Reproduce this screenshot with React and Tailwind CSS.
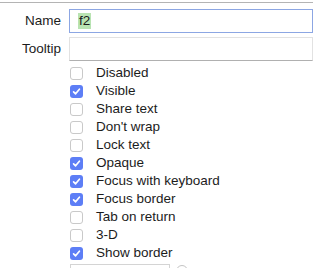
import React from 'react';

const options = [
  { label: 'Disabled', checked: false },
  { label: 'Visible', checked: true },
  { label: 'Share text', checked: false },
  { label: "Don't wrap", checked: false },
  { label: 'Lock text', checked: false },
  { label: 'Opaque', checked: true },
  { label: 'Focus with keyboard', checked: true },
  { label: 'Focus border', checked: true },
  { label: 'Tab on return', checked: false },
  { label: '3-D', checked: false },
  { label: 'Show border', checked: true },
];

const Checkbox = ({ checked }) =>
  checked ? (
    <span className="flex items-center justify-center w-[13px] h-[13px] rounded-[3px] bg-[#5d7ef6]">
      <svg width="9" height="9" viewBox="0 0 9 9" fill="none">
        <path d="M1.6 4.8 L3.6 6.8 L7.4 2.2" stroke="white" strokeWidth="1.7" strokeLinecap="round" strokeLinejoin="round" />
      </svg>
    </span>
  ) : (
    <span className="block w-[13px] h-[13px] rounded-[3px] bg-white border border-[#c9c9c9]" />
  );

export default function App() {
  return (
    <div className="w-[313px] h-[268px] overflow-hidden bg-white pt-[2px] text-[13.5px] text-[#1c1c1c] font-['Liberation_Sans',Helvetica,Arial,sans-serif]">
      <div className="border-t border-[#b4b4b4] pt-[6px]">
        <div className="grid grid-cols-[61px_1fr] gap-x-2 gap-y-[4px] items-center">
          <span className="text-right">Name</span>
          <div className="h-[24px] border border-[#8ca6e3] flex items-center pl-[8px]">
            <span className="bg-[#b9e3b2] px-[1px] leading-[16px]">f2</span>
          </div>
          <span className="text-right">Tooltip</span>
          <div className="h-[24px] border border-[#e2e2e2] border-b-[#b0b0b0]" />
        </div>

        <div className="mt-[3px] pl-[70px] flex flex-col">
          {options.map((o) => (
            <div key={o.label} className="h-[18px] flex items-center gap-[13px]">
              <Checkbox checked={o.checked} />
              <span>{o.label}</span>
            </div>
          ))}
          <div className="mt-[2px] flex items-start gap-[6px]">
            <div className="w-[100px] h-[20px] border border-[#d4d4d4]" />
            <span className="block w-[12px] h-[12px] rounded-full border border-[#c4c4c4] mt-[1px]" />
          </div>
        </div>
      </div>
    </div>
  );
}
